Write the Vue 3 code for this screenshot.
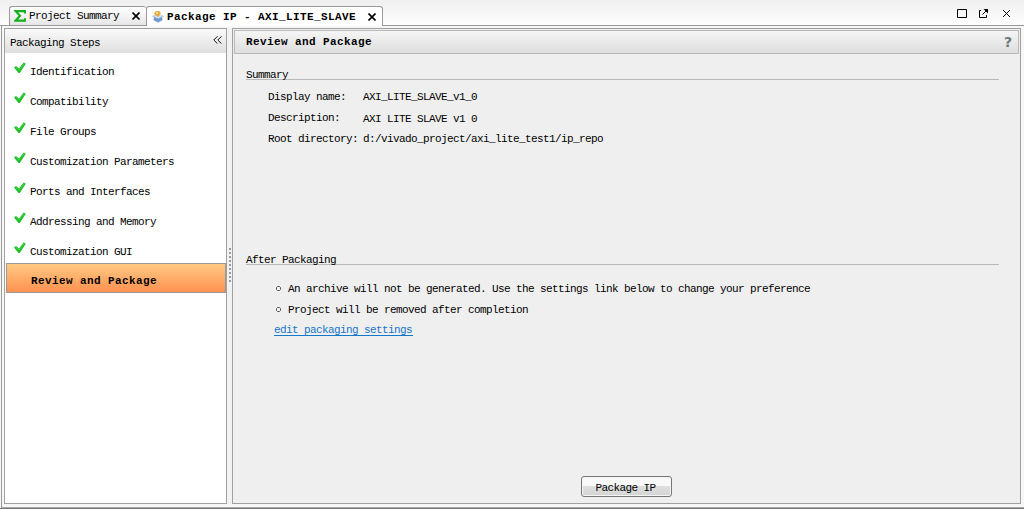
<script setup>
const steps = ['Identification', 'Compatibility', 'File Groups', 'Customization Parameters', 'Ports and Interfaces', 'Addressing and Memory', 'Customization GUI']
const notes = ['An archive will not be generated. Use the settings link below to change your preference', 'Project will be removed after completion']
</script>

<template>
  <div class="window">
    <div class="tabbar">
      <div class="tab idle">
        <svg class="sigma" width="12" height="12" viewBox="0 0 12 12"><path d="M11 3.5V1.2H1.6L6 5.8L1.6 10.6H11V8.2" fill="none" stroke="#15b01d" stroke-width="2.2" /></svg>
        <span class="text">Project Summary</span>
        <svg class="close first" width="8" height="8" viewBox="0 0 8 8"><path d="M.5.5L7.5 7.5M7.5.5L.5 7.5" stroke="#000" stroke-width="1.6" /></svg>
      </div>
      <div class="tab active">
        <svg class="package" width="12" height="12" viewBox="0 0 12 12">
          <path d="M0 5L6 3L12 5L10 7L11 9L6 12L1 9L2 7Z" fill="#a9c3e6" />
          <path d="M2 6L6 8L10 6V9L6 11L2 9Z" fill="#6f98ca" />
          <path d="M1 5L6 7L11 5L8 4H4Z" fill="#d5e5f7" />
          <path d="M4 0H7L9 2L8 4L6 6L3 4L2 2Z" fill="#e6ad43" />
          <path d="M4 1H6V3H4Z" fill="#f8d98e" />
        </svg>
        <span class="text bold">Package IP - AXI_LITE_SLAVE</span>
        <svg class="close" width="8" height="8" viewBox="0 0 8 8"><path d="M.5.5L7.5 7.5M7.5.5L.5 7.5" stroke="#000" stroke-width="1.6" /></svg>
      </div>
      <svg class="controls" width="56" height="11" viewBox="0 0 56 11" fill="none" stroke="#000">
        <path d="M.5 1.5H9.5V9.5H.5Z" />
        <path d="M24 2.5H22.5V9.5H29.5V7M25.5 6.5L30 2" />
        <path d="M26.5 1H31V5.500Z" fill="#000" stroke="none" />
        <path d="M46 2L53 9M53 2L46 9" />
      </svg>
    </div>
    <div class="body">
      <aside class="sidebar">
        <header class="side-head">
          <span class="text">Packaging Steps</span>
          <svg width="9" height="8" viewBox="0 0 9 8"><path d="M4.5.3L.8 4L4.500 7.7M8.5.3L4.8 4L8.5 7.7" fill="none" stroke="#111" /></svg>
        </header>
        <div v-for="step in steps" :key="step" class="step">
          <svg width="12" height="12" viewBox="0 0 12 12"><path d="M0 5.5L2 4L5 6.5L9.7.5L11.8 1.8L5.8 11H4.5Z" fill="#20bd2b" /><path d="M1.5 5.2L5 8L10.2 1.8" fill="none" stroke="#40db42" /></svg>
          <span class="text">{{ step }}</span>
        </div>
        <div class="step current"><span class="text bold">Review and Package</span></div>
      </aside>
      <div class="splitter"><i v-for="n in 9" :key="n"></i></div>
      <main class="content">
        <header class="main-head">
          <span class="text bold">Review and Package</span>
          <span class="help">?</span>
        </header>
        <section class="summary">
          <h2 class="text">Summary</h2>
          <dl class="text">
            <dt>Display name:</dt><dd>AXI_LITE_SLAVE_v1_0</dd>
            <dt>Description:</dt><dd class="lower">AXI LITE SLAVE v1 0</dd>
            <dt>Root directory:</dt><dd>d:/vivado_project/axi_lite_test1/ip_repo</dd>
          </dl>
        </section>
        <section class="after">
          <h2 class="text">After Packaging</h2>
          <ul class="text">
            <li v-for="note in notes" :key="note"><svg width="5" height="5" viewBox="0 0 5 5"><path d="M1.5.5H3.5L4.5 1.5V3.5L3.5 4.5H1.5L.5 3.5V1.5Z" fill="none" stroke="#333" stroke-width=".8" /></svg>{{ note }}</li>
          </ul>
          <a class="text">edit packaging settings</a>
        </section>
        <button class="text">Package IP</button>
      </main>
    </div>
  </div>
</template>

<style>
body { background: #f0f0f0; overflow: hidden; }
</style>

<style scoped>
* { box-sizing: border-box; }
.window { width: 1024px; height: 509px; background: #f7f7f7; border-bottom: 1px solid #777; display: flex; flex-direction: column; }
.text { font-family: "Liberation Mono", monospace; font-size: 11px; line-height: 14px; letter-spacing: -0.601px; color: #000; white-space: pre; font-weight: normal; }
.bold { font-weight: bold; letter-spacing: 0.399px; }
.tabbar { height: 26px; flex: none; display: flex; align-items: flex-end; padding-left: 9px; background: linear-gradient(#efefef, #fff); box-shadow: inset 0 -1px #999; }
.tab { display: flex; align-items: center; border: 1px solid #999; border-radius: 3px 3px 0 0; }
.idle { width: 137px; height: 20px; padding-left: 4px; background: linear-gradient(#fff, #e6e6e6); border-right: 0; }
.active { width: 237px; height: 20px; padding-left: 5px; border-bottom: 0; background: #fff; }
.tab .text { margin-left: 3px; }
.idle .text { margin-left: 3px; }
.close { margin-left: 12px; }
.close.first { margin-left: 13px; }
.controls { margin: 0 11px 7px auto; }
.body { flex: 1; display: flex; margin-left: 1px; padding: 2px 3px 3px 2px; border-left: 1px solid #999; border-bottom: 1px solid #aaa; }
.sidebar { width: 223px; background: #fff; border: 1px solid #a0a0a0; }
.side-head { height: 24px; display: flex; align-items: center; justify-content: space-between; padding: 3px 4px 0 5px; background: linear-gradient(#fafafa, #dfdfdf); }
.side-head svg { margin-top: -5px; }
.step { height: 30px; display: flex; align-items: flex-start; padding: 9px 0 0 9px; }
.step svg { flex: none; }
.step .text { margin: 3px 0 0 4px; }
.current { margin: 0 0 0 1px; padding-left: 24px; padding-top: 7px; border: 1px solid #999; background: linear-gradient(#ffca85, #ff914f); }
.current .text { margin: 3px 0 0 0; }
.splitter { width: 5px; background: #f2f2f2; display: flex; flex-direction: column; gap: 2px; padding: 220px 0 0 2px; }
.splitter i { width: 2px; height: 2px; background: #999; }
.content { flex: 1; background: #efefef; border: 1px solid #a0a0a0; padding: 1px; display: flex; flex-direction: column; }
.main-head { height: 24px; flex: none; display: flex; align-items: center; justify-content: space-between; border: 1px solid #b9b9bc; background: linear-gradient(#f5f5f6, #dededf); padding: 0 6px 0 11px; }
.help { font: bold 14px/14px "DejaVu Sans", sans-serif; color: #6d797b; }
section { padding: 0 20px 0 12px; }
.summary { height: 185px; padding-top: 14px; }
h2 { margin: 0; height: 12px; line-height: 13px; border-bottom: 1px solid #b9b9b9; }
dl { margin: 10px 0 0 22px; display: grid; grid-template-columns: 95px 1fr; grid-template-rows: 21px 21px 21px; }
dd { margin: 0; }
.lower { padding-top: 1px; }
.after { padding-top: 14px; }
ul { margin: 17px 0 0 29px; padding: 0; list-style: none; }
li { height: 21px; display: flex; }
li svg { margin: 4px 7px 0 1px; }
a { display: block; margin-left: 28px; width: 139px; height: 13px; margin-top: -1px; line-height: 15px; border-bottom: 1px solid #1278c8; }
a.text { color: #1874c9; line-height: 15px; }
button { width: 91px; height: 21px; margin: auto auto 5px 347px; padding: 2px 2px 0 0; border: 1px solid #777; border-radius: 3px; background: linear-gradient(#f8f8f8 48%, #dedede 50%, #d4d4d4); box-shadow: inset 0 0 0 1px #f5f5f5; }
</style>
